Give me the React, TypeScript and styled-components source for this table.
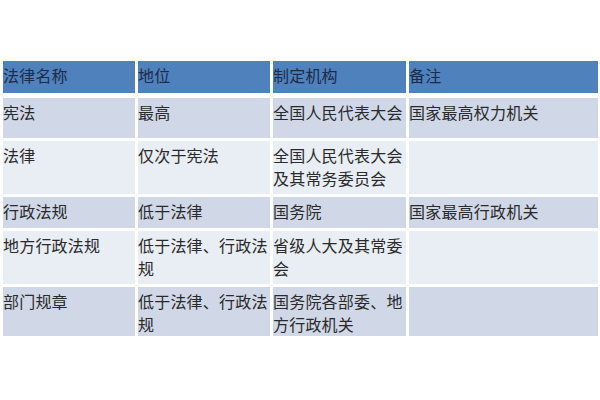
import React from 'react';
import styled, { createGlobalStyle } from 'styled-components';

interface Row {
    cells: string[];
    height: number;
}

const header = ['法律名称', '地位', '制定机构', '备注'];

const rows: Row[] = [
    { cells: ['宪法', '最高', '全国人民代表大会', '国家最高权力机关'], height: 40 },
    { cells: ['法律', '仅次于宪法', '全国人民代表大会及其常务委员会', ''], height: 53 },
    { cells: ['行政法规', '低于法律', '国务院', '国家最高行政机关'], height: 31 },
    { cells: ['地方行政法规', '低于法律、行政法规', '省级人大及其常委会', ''], height: 53 },
    { cells: ['部门规章', '低于法律、行政法规', '国务院各部委、地方行政机关', ''], height: 49 }
];

export default function App () {
    return (
        <>
            <GlobalStyle />
            <Page>
                <Table>
                    {header.map((text) => (
                        <HeaderCell key={text}>{text}</HeaderCell>
                    ))}
                    {rows.map((row, r) => row.cells.map((text, c) => (
                        <Cell key={`${r}-${c}`} $band={r % 2 === 0} $height={row.height}>
                            {text}
                        </Cell>
                    )))}
                </Table>
            </Page>
        </>
    );
}

const GlobalStyle = createGlobalStyle`
    html, body {
        margin: 0;
        padding: 0;
        background: #ffffff;
    }
    body {
        font-family: "Noto Sans CJK SC", "Noto Sans", sans-serif;
    }
`;

const Page = styled.div`
    width: 600px;
    height: 400px;
    padding: 61px 0 0 3px;
    box-sizing: border-box;
`;

const Table = styled.div`
    display: grid;
    grid-template-columns: 132px 132px 133px 189px;
    column-gap: 3px;
    row-gap: 3px;
`;

const HeaderCell = styled.div`
    height: 32px;
    margin-bottom: 2px;
    background: #4f81bd;
    color: #1d2b47;
    font-size: 16px;
    line-height: 23px;
    letter-spacing: 0.2px;
    padding-top: 3px;
    box-sizing: border-box;
`;

const Cell = styled.div<{ $band: boolean; $height: number }>`
    height: ${(p) => p.$height}px;
    background: ${(p) => (p.$band ? '#d0d8e8' : '#e9edf4')};
    color: #2a2a2a;
    font-size: 16px;
    line-height: 23px;
    letter-spacing: 0.2px;
    padding-top: 3px;
    box-sizing: border-box;
    overflow: hidden;
    line-break: anywhere;
`;
